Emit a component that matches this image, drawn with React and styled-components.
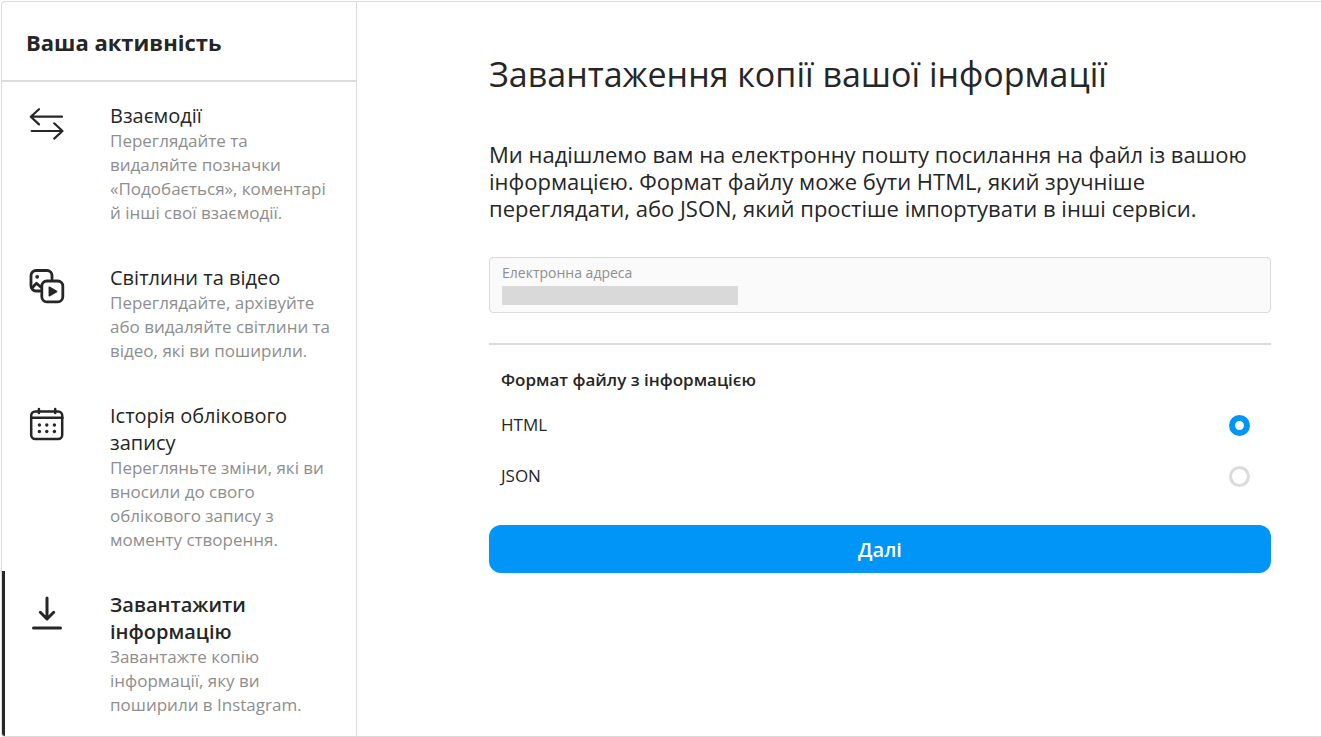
import React, { useState } from "react";
import styled, { createGlobalStyle } from "styled-components";

const GlobalStyle = createGlobalStyle`
  *, *::before, *::after {
    box-sizing: border-box;
  }

  body {
    margin: 0;
    background: #fff;
    color: #262626;
    font-family: "Open Sans", "Noto Sans", sans-serif;
  }

  h1, h2, h3, p, fieldset, legend {
    margin: 0;
    padding: 0;
    border: 0;
  }
`;

const Page = styled.div`
  display: flex;
  margin: 1px 0 0 1px;
  border: 1px solid #dbdbdb;
  border-right: 0;
  border-radius: 4px 0 0 4px;
  overflow: hidden;
`;

const Sidebar = styled.aside`
  flex: 0 0 355px;
  border-right: 1px solid #dbdbdb;
`;

const SidebarHeader = styled.header`
  height: 80px;
  padding: 27px 24px 0;
  border-bottom: 2px solid #dbdbdb;
`;

const SidebarTitle = styled.h2`
  font-size: 22px;
  line-height: 27px;
  font-weight: 700;
`;

const NavItem = styled.a`
  display: flex;
  gap: 45px;
  padding: 20px 22px 19px 24px;
  border-left: 3px solid ${({ $active }) => ($active ? "#262626" : "transparent")};
  color: inherit;
  text-decoration: none;

  svg {
    flex: none;
    width: 36px;
    height: 36px;
    margin-top: 4px;
  }
`;

const NavTitle = styled.h3`
  font-size: 20px;
  line-height: 27px;
  font-weight: ${({ $active }) => ($active ? 600 : 400)};
`;

const NavText = styled.p`
  color: #8e8e8e;
  font-size: 17px;
  line-height: 24px;
`;

const Main = styled.main`
  flex: 1;
  min-width: 0;
  padding: 48px 50px 48px 132px;
`;

const Heading = styled.h1`
  font-size: 34px;
  line-height: 48px;
  font-weight: 400;
`;

const Intro = styled.p`
  margin-top: 43px;
  font-size: 22px;
  line-height: 27px;
`;

const Field = styled.div`
  display: flex;
  flex-direction: column;
  align-items: flex-start;
  gap: 3px;
  height: 56px;
  margin-top: 35px;
  padding: 5px 12px;
  border: 1px solid #dbdbdb;
  border-radius: 4px;
  background: #fafafa;
`;

const FieldLabel = styled.label`
  color: #8e8e8e;
  font-size: 14px;
  line-height: 20px;
`;

const FieldInput = styled.input`
  width: 236px;
  height: 19px;
  padding: 0;
  border: 0;
  border-radius: 0;
  background: #d9d9d9;
`;

const Formats = styled.fieldset`
  margin-top: 30px;
  padding: 0 21px 37px 12px;
  border-top: 2px solid #dbdbdb;
`;

const FormatsTitle = styled.h3`
  padding: 23px 0 21px;
  font-size: 17px;
  line-height: 24px;
  font-weight: 600;
`;

const FormatRow = styled.label`
  display: flex;
  align-items: center;
  justify-content: space-between;
  height: 24px;
  font-size: 17px;
  line-height: 24px;

  & + & {
    margin-top: 27px;
  }
`;

const Radio = styled.input`
  appearance: none;
  width: 21px;
  height: 21px;
  margin: 0;
  border: 3px solid #dbdbdb;
  border-radius: 50%;
  background: #fff;

  &:checked {
    border: 6px solid #0095f6;
  }
`;

const NextButton = styled.button`
  display: block;
  width: 100%;
  height: 48px;
  border: 0;
  border-radius: 12px;
  background: #0095f6;
  color: #fff;
  font-family: inherit;
  font-size: 20px;
  font-weight: 600;
  cursor: pointer;
`;

const Icon = ({ children }) => (
  <svg
    viewBox="0 0 36 36"
    fill="none"
    stroke="#262626"
    strokeWidth="2.8"
    strokeLinecap="round"
    strokeLinejoin="round"
    aria-hidden="true"
  >
    {children}
  </svg>
);

const ArrowsIcon = () => (
  <Icon>
    <path d="M33 10.7H2M10 3.2L1.8 10.7L10 18.4" strokeWidth="2.2" />
    <path d="M2.7 25H33M25.2 17.3L33.5 25L25.2 32.6" strokeWidth="2.2" />
  </Icon>
);

const MediaIcon = () => (
  <Icon>
    <path d="M11 23H7a5 5 0 0 1-5-5V7.5a5 5 0 0 1 5-5H18a5 5 0 0 1 5 5V11" />
    <path d="M3 20l4.500-4.800 4.500 4" />
    <circle cx="8.2" cy="8.8" r="1.9" fill="#262626" stroke="none" />
    <rect x="12.8" y="13" width="21" height="20.8" rx="5" />
    <path d="M20.3 19.2v8.6l7.3-4.3z" fill="#262626" strokeWidth="1.5" />
  </Icon>
);

const CalendarIcon = () => (
  <Icon>
    <rect x="2.2" y="5.5" width="31" height="27.5" rx="4" strokeWidth="2.5" />
    <path d="M2.5 11.8h31" strokeWidth="2.5" />
    <path d="M9.9 3v4M26.2 3v4" strokeWidth="2.5" />
    <g fill="#262626" stroke="none">
      {[10.4, 17.8, 25.4].map((cx) => (
        <React.Fragment key={cx}>
          <circle cx={cx} cy="19" r="1.7" />
          <circle cx={cx} cy="25.5" r="1.7" />
        </React.Fragment>
      ))}
    </g>
  </Icon>
);

const DownloadIcon = () => (
  <Icon>
    <path d="M18 3V23.5M11.3 17.3L18 24L24.7 17.3M4.5 33H31.5" strokeWidth="3" />
  </Icon>
);

const sections = [
  {
    id: "interactions",
    icon: <ArrowsIcon />,
    title: "Взаємодії",
    text: "Переглядайте та видаляйте позначки «Подобається», коментарі й інші свої взаємодії.",
  },
  {
    id: "media",
    icon: <MediaIcon />,
    title: "Світлини та відео",
    text: "Переглядайте, архівуйте або видаляйте світлини та відео, які ви поширили.",
  },
  {
    id: "history",
    icon: <CalendarIcon />,
    title: "Історія облікового запису",
    text: "Перегляньте зміни, які ви вносили до свого облікового запису з моменту створення.",
  },
  {
    id: "download",
    icon: <DownloadIcon />,
    title: "Завантажити інформацію",
    text: "Завантажте копію інформації, яку ви поширили в Instagram.",
    active: true,
  },
];

const App = () => {
  const [format, setFormat] = useState("HTML");

  return (
    <>
      <GlobalStyle />
      <Page>
        <Sidebar>
          <SidebarHeader>
            <SidebarTitle>Ваша активність</SidebarTitle>
          </SidebarHeader>
          <nav>
            {sections.map(({ id, icon, title, text, active }) => (
              <NavItem key={id} href={`#${id}`} $active={active}>
                {icon}
                <div>
                  <NavTitle $active={active}>{title}</NavTitle>
                  <NavText>{text}</NavText>
                </div>
              </NavItem>
            ))}
          </nav>
        </Sidebar>
        <Main>
          <Heading>Завантаження копії вашої інформації</Heading>
          <Intro>
            Ми надішлемо вам на електронну пошту посилання на файл із вашою
            інформацією. Формат файлу може бути HTML, який зручніше
            переглядати, або JSON, який простіше імпортувати в інші сервіси.
          </Intro>
          <Field>
            <FieldLabel htmlFor="email">Електронна адреса</FieldLabel>
            <FieldInput id="email" type="email" />
          </Field>
          <Formats aria-labelledby="format-title">
            <FormatsTitle id="format-title">Формат файлу з інформацією</FormatsTitle>
            {["HTML", "JSON"].map((name) => (
              <FormatRow key={name}>
                {name}
                <Radio
                  type="radio"
                  name="format"
                  checked={format === name}
                  onChange={() => setFormat(name)}
                />
              </FormatRow>
            ))}
          </Formats>
          <NextButton type="button">Далі</NextButton>
        </Main>
      </Page>
    </>
  );
};

export default App;
